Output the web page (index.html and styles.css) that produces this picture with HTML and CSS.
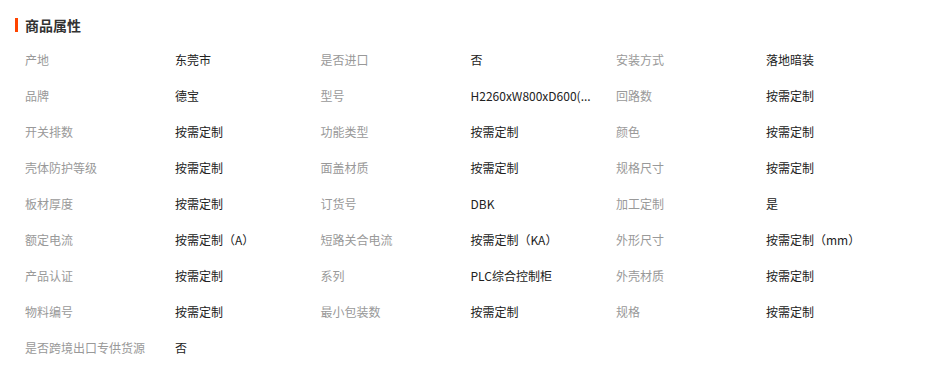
FILE: index.html
```html
<!DOCTYPE html>
<html lang="zh-CN">
<head>
<meta charset="utf-8">
<link rel="stylesheet" href="styles.css">
</head>
<body>
<div class="attrs">
  <h3 class="title"><span class="bar"></span>商品属性</h3>
  <div class="grid">
    <div class="k">产地</div><div class="v">东莞市</div>
    <div class="k">是否进口</div><div class="v">否</div>
    <div class="k">安装方式</div><div class="v">落地暗装</div>
    <div class="k">品牌</div><div class="v">德宝</div>
    <div class="k">型号</div><div class="v">H2260xW800xD600(...</div>
    <div class="k">回路数</div><div class="v">按需定制</div>
    <div class="k">开关排数</div><div class="v">按需定制</div>
    <div class="k">功能类型</div><div class="v">按需定制</div>
    <div class="k">颜色</div><div class="v">按需定制</div>
    <div class="k">壳体防护等级</div><div class="v">按需定制</div>
    <div class="k">面盖材质</div><div class="v">按需定制</div>
    <div class="k">规格尺寸</div><div class="v">按需定制</div>
    <div class="k">板材厚度</div><div class="v">按需定制</div>
    <div class="k">订货号</div><div class="v">DBK</div>
    <div class="k">加工定制</div><div class="v">是</div>
    <div class="k">额定电流</div><div class="v">按需定制（A）</div>
    <div class="k">短路关合电流</div><div class="v">按需定制（KA）</div>
    <div class="k">外形尺寸</div><div class="v">按需定制（mm）</div>
    <div class="k">产品认证</div><div class="v">按需定制</div>
    <div class="k">系列</div><div class="v">PLC综合控制柜</div>
    <div class="k">外壳材质</div><div class="v">按需定制</div>
    <div class="k">物料编号</div><div class="v">按需定制</div>
    <div class="k">最小包装数</div><div class="v">按需定制</div>
    <div class="k">规格</div><div class="v">按需定制</div>
    <div class="k">是否跨境出口专供货源</div><div class="v">否</div>
  </div>
</div>
</body>
</html>
```
FILE: styles.css
```css
html, body {
  margin: 0;
  padding: 0;
  background: #fff;
}
body {
  font-family: "Noto Sans CJK SC", "Noto Sans", sans-serif;
  font-size: 12px;
  color: #333;
}
.attrs {
  padding: 14px 25px 0 15px;
}
.title {
  display: flex;
  align-items: center;
  margin: 0;
  height: 22px;
  font-size: 14px;
  font-weight: bold;
  color: #333;
}
.bar {
  width: 3px;
  height: 14px;
  background: #ff4400;
  margin-right: 7px;
}
.grid {
  display: grid;
  grid-template-columns: 150px 145.5px 150px 145.5px 150px 145.5px;
  grid-auto-rows: 36px;
  margin-top: 6px;
  padding-left: 10px;
}
.k, .v {
  white-space: nowrap;
  line-height: 36px;
}
.k {
  color: #999;
}
.v {
  color: #222;
}
```
